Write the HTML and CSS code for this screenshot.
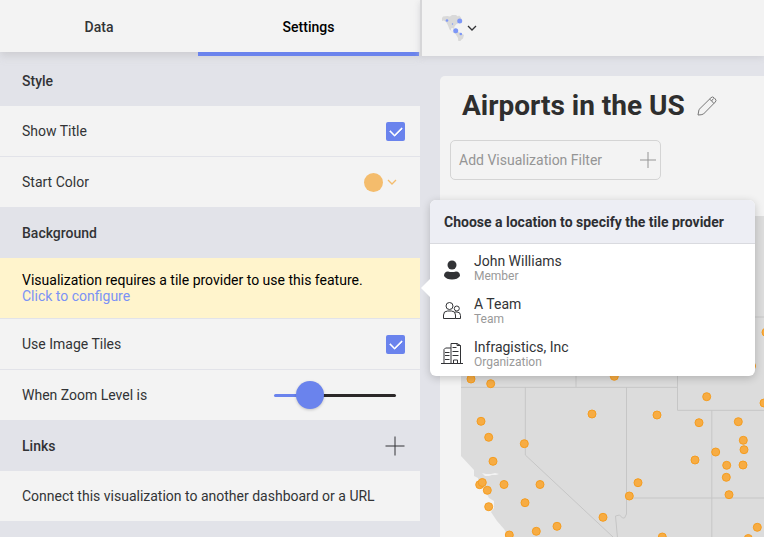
FILE: index.html
```html
<!DOCTYPE html>
<html lang="en">
<head>
<meta charset="utf-8">
<meta name="viewport" content="width=device-width, initial-scale=1">
<title>Airports in the US</title>
<link rel="stylesheet" href="styles.css">
</head>
<body>
<div class="app">
  <aside class="panel">
    <nav class="tabs">
      <button class="tab" type="button">Data</button>
      <button class="tab tab-active" type="button">Settings</button>
    </nav>

    <section>
      <h2 class="section-title section-first">Style</h2>
      <div class="row">
        <label for="show-title">Show Title</label>
        <input class="check" id="show-title" type="checkbox" checked>
      </div>
      <div class="row">
        <span id="color-label">Start Color</span>
        <button class="color-button" type="button" aria-labelledby="color-label">
          <span class="swatch"></span>
          <svg class="color-chevron" viewBox="0 0 10 6"><path d="M1 1l4 4 4-4"/></svg>
        </button>
      </div>
    </section>

    <section>
      <h2 class="section-title">Background</h2>
      <div class="notice">
        <p>Visualization requires a tile provider to use this feature.</p>
        <a href="#providers">Click to configure</a>
      </div>
      <div class="row">
        <label for="image-tiles">Use Image Tiles</label>
        <input class="check" id="image-tiles" type="checkbox" checked>
      </div>
      <div class="row">
        <label for="zoom-level">When Zoom Level is</label>
        <input class="slider" id="zoom-level" type="range" min="0" max="100" value="23">
      </div>
    </section>

    <section>
      <h2 class="section-title">Links
        <button class="icon-button" type="button" aria-label="Add link">
          <svg class="plus" viewBox="0 0 20 20"><path d="M10 .5v19M.5 10h19"/></svg>
        </button>
      </h2>
      <div class="row">Connect this visualization to another dashboard or a URL</div>
    </section>
  </aside>

  <main class="stage">
    <header class="toolbar">
      <button class="chart-type" type="button" aria-label="Visualization type">
        <svg class="americas" viewBox="0 0 22 26">
          <path class="land" d="M0 3l1-1.500 4-.5 3 .5 2-1.500 4 0 2 1.500 1-1 2 2 1 3-3 1-1 2-2 1-1.500 2-.5 2.500-1.500-1-1.500 .5 0 2 2 1.500 2.500 1 2-1.500 3 1.500 3.500 2-1 3.500-2 1.500-1 2.500-1.500 1.500-.5-6-2.500-4-3-2-3-2.500-1.500-4-1.500-3-2.500-2-2 .5z"/>
          <circle cx="5" cy="5.500" r="1.300"/><circle cx="17.700" cy="6" r="2.500"/>
          <circle cx="10.500" cy="9" r=".7"/><circle cx="13.700" cy="15.700" r="2.500"/><circle cx="18.800" cy="19" r="1.300"/>
        </svg>
        <svg class="type-chevron" viewBox="0 0 10 6"><path d="M1 1l4 4 4-4"/></svg>
      </button>
    </header>

    <article class="card">
      <div class="title-bar">
        <h1>Airports in the US</h1>
        <button class="icon-button" type="button" aria-label="Edit title">
          <svg class="pencil" viewBox="0 0 20 20"><path d="M1 19l1-5.500L14 1.700q1.500-1.500 3 0l1.300 1.300q1.500 1.500 0 3L6.500 18q-2 1-5.500 1zM12.500 3.200q2 1 4.300 4.300M14.500 5l2-2.500"/></svg>
        </button>
      </div>
      <button class="filter" type="button">Add Visualization Filter
        <svg viewBox="0 0 16 16"><path d="M8 0v16M0 8h16"/></svg>
      </button>
      <svg class="map" viewBox="461 216 303 321" preserveAspectRatio="xMinYMin slice" role="img" aria-label="Map of airports">
        <path class="states" d="M461 216H1400V1000H540L508 536l-4-7-7-8-6-9 3-4v-7l-5-3-4-8-6-7-1-5-4-2v-6l-13-14z"/>
        <path class="bay" d="M482 473l4 1 5 0 4-1 4 1-3 1-4 0-3 1-4 0z"/>
        <path class="borders" d="M461 387.300H677.500M576 330V387M677.500 330V410.300H1400M711.800 410V1000M626.500 387V514l-2 4-2 0-3-3-4 1 2 22M525.300 387V455L613 537M626 498H1400M740 317H1400"/>
        <g class="airports">
          <circle cx="471" cy="379" r="4"/><circle cx="490.700" cy="383.700" r="4"/>
          <circle cx="481" cy="421.300" r="4"/><circle cx="488.700" cy="437.300" r="4"/>
          <circle cx="493" cy="461.300" r="4"/><circle cx="479.700" cy="484.700" r="4"/>
          <circle cx="482.300" cy="482.500" r="4"/><circle cx="487.300" cy="490.300" r="4"/>
          <circle cx="504" cy="484.500" r="4"/><circle cx="540" cy="484.500" r="4"/>
          <circle cx="524.300" cy="443.700" r="4"/><circle cx="592" cy="414" r="4"/>
          <circle cx="525" cy="502.700" r="4"/><circle cx="488.700" cy="506.700" r="4"/>
          <circle cx="557" cy="526.300" r="4"/><circle cx="536.300" cy="531.300" r="4"/>
          <circle cx="509.300" cy="535" r="4"/><circle cx="603" cy="517.300" r="4"/>
          <circle cx="614.300" cy="376.300" r="4"/><circle cx="706.700" cy="396.700" r="4"/>
          <circle cx="764" cy="403" r="4"/><circle cx="657" cy="415" r="4"/>
          <circle cx="699" cy="422.700" r="4"/><circle cx="738.300" cy="421.700" r="4"/>
          <circle cx="743.300" cy="440.300" r="4"/><circle cx="744" cy="449.700" r="4"/>
          <circle cx="715.700" cy="452" r="4"/><circle cx="695" cy="460" r="4"/>
          <circle cx="726.700" cy="465.300" r="4"/><circle cx="743" cy="465" r="4"/>
          <circle cx="726.300" cy="477.300" r="4"/><circle cx="729" cy="494.700" r="4"/>
          <circle cx="638" cy="482.700" r="4"/><circle cx="629.300" cy="496" r="4"/>
          <circle cx="662.300" cy="537" r="4"/><circle cx="757.300" cy="527.300" r="4"/>
          <circle cx="748.300" cy="538.500" r="4"/><circle cx="766" cy="332.300" r="4"/>
          <circle cx="751.500" cy="366" r="4"/>
        </g>
      </svg>
    </article>

    <div class="popup" id="providers">
      <h2>Choose a location to specify the tile provider</h2>
      <ul>
        <li><button class="place" type="button">
          <svg class="solid" viewBox="0 0 22 24"><circle cx="11" cy="9" r="4.500"/><path d="M3 20q0-4.500 4-4.500 4 1.200 8 0 4 0 4 4.500-2.500 3.500-8 3.500t-8-3.500z"/></svg>
          <span><b>John Williams</b><small>Member</small></span>
        </button></li>
        <li><button class="place" type="button">
          <svg viewBox="0 0 22 24"><circle cx="8.500" cy="7" r="3.500"/><circle cx="15.800" cy="9.500" r="2.500"/><path d="M2.500 19.500v-3.500q0-4 4-4h4q4 0 4 4v3.500zM14.500 19.500h5v-3q0-3.500-3.500-3.500h-2"/></svg>
          <span><b>A Team</b><small>Team</small></span>
        </button></li>
        <li><button class="place" type="button">
          <svg viewBox="0 0 22 24"><path d="M0 21.500h22M3 21.500v-14l1.500-1.500h5.500M10 21.500V1.500h6l3.500 2v18M16 1.500v2h3.500M12.500 21.500V18h4v3.500M11.500 5.500h4M11.500 9.500h6M11.500 13.500h6M4 10.500h4.500M4 13.500h4.500M4 17.500h4.500"/></svg>
          <span><b>Infragistics, Inc</b><small>Organization</small></span>
        </button></li>
      </ul>
    </div>
  </main>
</div>
</body>
</html>
```

FILE: styles.css
```css
* {
  box-sizing: border-box;
}

body {
  margin: 0;
  background: #e2e3e9;
  color: #323336;
  font: 14px/16px Roboto, "Liberation Sans", sans-serif;
}

h1, h2, p, ul {
  margin: 0;
  padding: 0;
}

ul {
  list-style: none;
}

button {
  padding: 0;
  border: 0;
  background: none;
  color: inherit;
  font: inherit;
  cursor: pointer;
}

svg {
  display: block;
  fill: none;
  stroke: currentColor;
}

.app {
  display: grid;
  grid-template-columns: minmax(300px, 420px) minmax(0, 1fr);
  height: 100vh;
  min-height: 537px;
  overflow: hidden;
}

/* Settings panel */
.tabs {
  position: relative;
  display: grid;
  grid-template-columns: 198fr 221fr;
  height: 52px;
  padding-right: 1px;
  background: #f3f3f3;
  box-shadow: 0 4px 8px #c8c8cccc;
}

.tab {
  position: relative;
  padding-top: 2px;
  font-weight: 500;
}

.tab-active {
  color: #000;
}

.tab-active::after {
  content: "";
  position: absolute;
  inset: 100% 0 auto;
  height: 4px;
  background: #6a83ed;
}

.section-title {
  display: flex;
  align-items: center;
  justify-content: space-between;
  height: 51px;
  padding: 0 15px 0 22px;
  font-size: 14px;
  font-weight: 500;
}

.section-first {
  height: 54px;
  padding-top: 4px;
}

.row {
  display: flex;
  align-items: center;
  justify-content: space-between;
  height: 51px;
  padding: 0 15px 0 22px;
  background: #f3f3f3;
  border-bottom: 1px solid #e2e3e9;
}

.row:last-child {
  height: 50px;
  border-bottom: 0;
}

.check {
  appearance: none;
  display: grid;
  place-items: center;
  width: 19px;
  height: 19px;
  margin: 0;
  border-radius: 2px;
  background: #fff;
}

.check:checked {
  background: #6a83ed;
}

.check:checked::before {
  content: "";
  width: 10px;
  height: 6px;
  margin-bottom: 3px;
  border: solid #fff;
  border-width: 0 0 2px 2px;
  border-radius: 1px;
  rotate: -45deg;
}

.color-button {
  display: flex;
  align-items: center;
  gap: 4px;
  margin-right: 8px;
}

.swatch {
  width: 19px;
  height: 19px;
  border-radius: 50%;
  background: #f4bc6c;
}

.color-chevron {
  width: 10px;
  height: 6px;
  color: #f4bc6c;
  stroke-width: 1.3;
}

.notice {
  height: 61px;
  padding: 14px 22px;
  border-bottom: 1px solid #e2e3e9;
  background: #fff4cc;
  color: #000;
}

.notice a {
  color: #7b92f5;
  text-decoration: none;
}

.slider {
  appearance: none;
  width: 122px;
  height: 28px;
  margin: 0 9px 0 0;
  background: none;
}

.slider::-webkit-slider-runnable-track {
  height: 3px;
  border-radius: 2px;
  background: linear-gradient(to right, #6a83ed 30%, #2b2728 30%);
}

.slider::-webkit-slider-thumb {
  appearance: none;
  width: 28px;
  height: 28px;
  margin-top: -13px;
  border-radius: 50%;
  background: #6a83ed;
  box-shadow: 0 1px 3px #0003;
}

.plus {
  width: 20px;
  height: 20px;
}

/* Visualization */
.stage {
  position: relative;
  display: flex;
  flex-direction: column;
  min-width: 0;
}

.toolbar {
  display: flex;
  align-items: center;
  height: 56px;
  padding-left: 20px;
  border-left: 2px solid #d6d6d8;
  background: #f3f3f3;
  box-shadow: 0 2px 6px #c8c8ccaa;
}

.chart-type {
  display: flex;
  align-items: center;
  gap: 3px;
}

.americas {
  width: 22px;
  height: 26px;
  fill: #7d97f7;
  stroke: none;
}

.land {
  fill: #d9d9d9;
}

.type-chevron {
  width: 10px;
  height: 6px;
  stroke-width: 1.3;
}

.card {
  display: flex;
  flex: 1;
  flex-direction: column;
  align-items: flex-start;
  min-height: 0;
  margin: 20px 0 0 20px;
  border-radius: 5px 0 0;
  background: #f3f3f3;
}

.title-bar {
  display: flex;
  align-items: center;
  gap: 12px;
  height: 60px;
  margin-bottom: 4px;
  padding: 0 22px;
}

h1 {
  color: #2e2e2e;
  font-size: 28px;
  line-height: 32px;
  font-weight: 700;
  white-space: nowrap;
}

.pencil {
  width: 20px;
  height: 20px;
  color: #777;
}

.filter {
  display: flex;
  align-items: center;
  justify-content: space-between;
  width: 211px;
  height: 40px;
  margin: 0 0 36px 10px;
  padding: 0 4px 0 8px;
  border: 1px solid #d4d4d4;
  border-radius: 5px;
  color: #959595;
  white-space: nowrap;
}

.filter svg {
  width: 16px;
  height: 16px;
}

.map {
  flex: 1;
  align-self: stretch;
  min-height: 0;
  margin-left: 21px;
}

.states {
  fill: #dcdcdc;
  stroke: none;
}

.bay {
  fill: #f3f3f3;
  stroke: none;
}

.borders {
  stroke: #c6c6c6;
}

.airports {
  fill: #f7ac43;
  stroke: #f59d20;
}

/* Tile provider menu */
.popup {
  position: absolute;
  top: 200px;
  left: 10px;
  right: 9px;
  max-width: 360px;
  border-radius: 6px;
  background: #fff;
  box-shadow: 0 2px 8px #0003;
}

.popup::before {
  content: "";
  position: absolute;
  top: 79px;
  left: -9px;
  border: solid transparent;
  border-width: 9px 9px 9px 0;
  border-right-color: #fff;
}

.popup h2 {
  height: 44px;
  padding: 0 14px;
  border-bottom: 1px solid #d9dadf;
  border-radius: 6px 6px 0 0;
  background: #edeef4;
  color: #2e2f33;
  font-size: 14px;
  line-height: 44px;
  font-weight: 700;
  white-space: nowrap;
}

.popup ul {
  display: grid;
  gap: 13px;
  padding: 9px 11px 7px;
}

.place {
  display: flex;
  align-items: center;
  gap: 11px;
  width: 100%;
  text-align: left;
}

.place svg {
  width: 22px;
  height: 24px;
}

.place .solid {
  fill: currentColor;
  stroke: none;
}

.place b {
  display: block;
  font-weight: 400;
}

.place small {
  display: block;
  color: #999;
  font-size: 12px;
  line-height: 14px;
}
```
